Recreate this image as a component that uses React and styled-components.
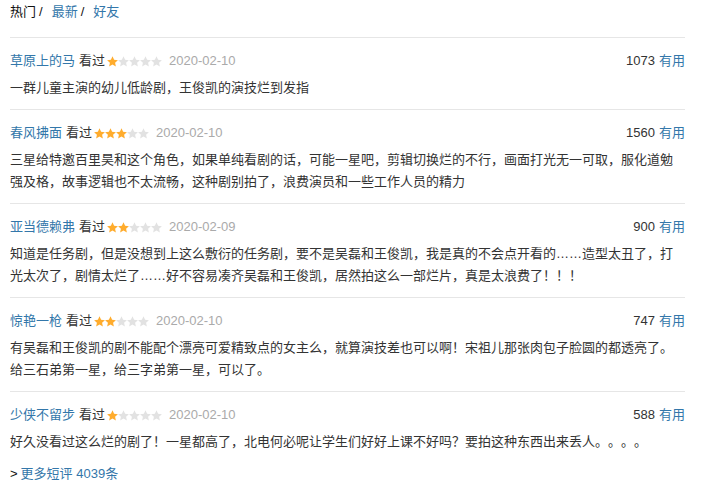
import styled, { createGlobalStyle } from 'styled-components';

const GlobalStyle = createGlobalStyle`
    body {
        margin: 0;
        background: #fff;
        font-family: 'Liberation Sans', 'Noto Sans CJK SC', Arial, sans-serif;
        font-size: 13px;
        color: #333;
        text-spacing-trim: space-all;
    }
`;

const Wrapper = styled.div`
    padding: 2px 20px 0 10px;
`;

const Tabs = styled.div`
    display: flex;
    align-items: center;
    height: 20px;
    line-height: 20px;
    margin-bottom: 15px;
    color: #111;
`;

const Tab = styled.span`
    color: ${(props) => (props.active ? '#111' : '#3377aa')};
`;

const Sep = styled.span`
    color: #111;
    margin: 0 9px 0 3px;
`;

const Item = styled.div`
    border-top: 1px solid #e6e6e6;
    padding: 13px 0 10px;
`;

const Header = styled.div`
    display: flex;
    align-items: center;
    justify-content: space-between;
    height: 20px;
    line-height: 20px;
`;

const Info = styled.div`
    display: flex;
    align-items: center;
`;

const User = styled.span`
    color: #3377aa;
`;

const Watched = styled.span`
    color: #333;
    margin-left: 4px;
`;

const Stars = styled.span`
    display: inline-flex;
    margin: 0 7px 0 2px;
`;

const Date = styled.span`
    color: #aaa;
`;

const Votes = styled.span`
    color: #333;
`;

const Useful = styled.span`
    color: #3377aa;
    margin-left: 4px;
`;

const Body = styled.p`
    margin: 6px 0 0;
    line-height: 22px;
    color: #333;
`;

const More = styled.div`
    line-height: 20px;
    margin-top: 1px;
    color: #111;

    a {
        color: #3377aa;
        text-decoration: none;
        margin-left: 3px;
    }
`;

function Star({ on }) {
    return (
        <svg width="11" height="11" viewBox="0 0 20 19">
            <polygon
                points="10,0 12.9,6.2 19.8,7 14.7,11.7 16.1,18.6 10,15.1 3.9,18.6 5.3,11.7 0.2,7 7.1,6.2"
                fill={on ? '#ffac2d' : '#e2e2e2'}
            />
        </svg>
    );
}

const comments = [
    {
        user: '草原上的马',
        rating: 1,
        date: '2020-02-10',
        votes: 1073,
        text: '一群儿童主演的幼儿低龄剧，王俊凯的演技烂到发指',
    },
    {
        user: '春风拂面',
        rating: 3,
        date: '2020-02-10',
        votes: 1560,
        text: '三星给特邀百里昊和这个角色，如果单纯看剧的话，可能一星吧，剪辑切换烂的不行，画面打光无一可取，服化道勉强及格，故事逻辑也不太流畅，这种剧别拍了，浪费演员和一些工作人员的精力',
    },
    {
        user: '亚当德赖弗',
        rating: 2,
        date: '2020-02-09',
        votes: 900,
        text: '知道是任务剧，但是没想到上这么敷衍的任务剧，要不是吴磊和王俊凯，我是真的不会点开看的……造型太丑了，打光太次了，剧情太烂了……好不容易凑齐吴磊和王俊凯，居然拍这么一部烂片，真是太浪费了！！！',
    },
    {
        user: '惊艳一枪',
        rating: 2,
        date: '2020-02-10',
        votes: 747,
        text: '有吴磊和王俊凯的剧不能配个漂亮可爱精致点的女主么，就算演技差也可以啊！宋祖儿那张肉包子脸圆的都透亮了。给三石弟第一星，给三字弟第一星，可以了。',
    },
    {
        user: '少侠不留步',
        rating: 1,
        date: '2020-02-10',
        votes: 588,
        text: '好久没看过这么烂的剧了！一星都高了，北电何必呢让学生们好好上课不好吗？要拍这种东西出来丢人。。。。',
    },
];

export default function App() {
    return (
        <Wrapper>
            <GlobalStyle />
            <Tabs>
                <Tab active>热门</Tab>
                <Sep>/</Sep>
                <Tab>最新</Tab>
                <Sep>/</Sep>
                <Tab>好友</Tab>
            </Tabs>
            {comments.map((c) => (
                <Item key={c.user}>
                    <Header>
                        <Info>
                            <User>{c.user}</User>
                            <Watched>看过</Watched>
                            <Stars>
                                {[1, 2, 3, 4, 5].map((n) => (
                                    <Star key={n} on={n <= c.rating} />
                                ))}
                            </Stars>
                            <Date>{c.date}</Date>
                        </Info>
                        <div>
                            <Votes>{c.votes}</Votes>
                            <Useful>有用</Useful>
                        </div>
                    </Header>
                    <Body>{c.text}</Body>
                </Item>
            ))}
            <More>
                &gt;<a href="#">更多短评 4039条</a>
            </More>
        </Wrapper>
    );
}
